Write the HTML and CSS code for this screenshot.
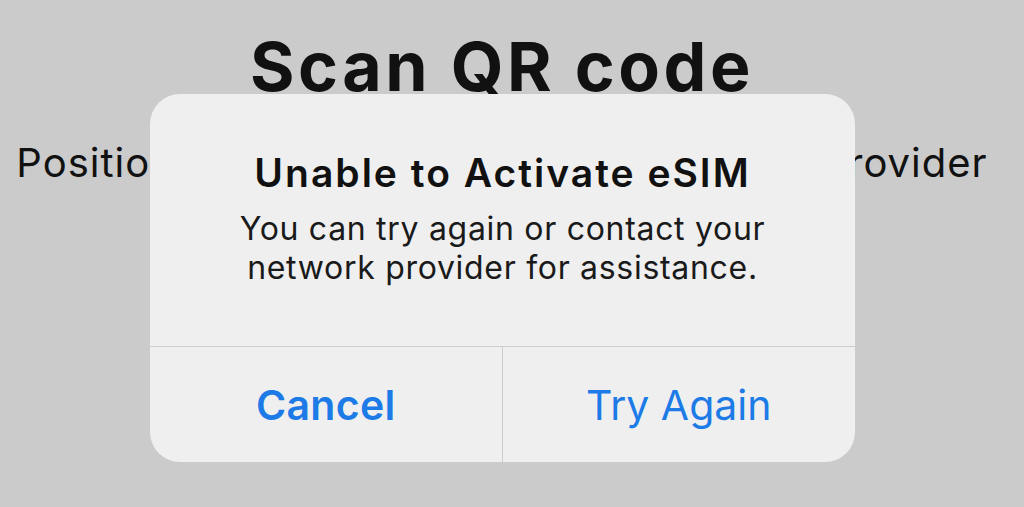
FILE: index.html
```html
<!DOCTYPE html>
<html lang="en">

<head>
  <meta charset="UTF-8" />
  <meta name="viewport" content="width=device-width, initial-scale=1" />
  <title>Scan QR code</title>
  <link rel="stylesheet" href="styles.css">
</head>

<body>

  <div class="screen">
    <h1 class="scan-title">Scan QR code</h1>
    <p class="scan-hint">Position the QR code from your network provider</p>
  </div>

  <div class="alert">
    <div class="alert-body">
      <h2 class="alert-title">Unable to Activate eSIM</h2>
      <p class="alert-text">You can try again or contact your<br>network provider for assistance.</p>
    </div>
    <div class="alert-actions">
      <button class="alert-btn cancel">Cancel</button>
      <button class="alert-btn">Try Again</button>
    </div>
  </div>

</body>

</html>
```

FILE: styles.css
```css
body {
  font-family: Inter, "Noto Sans", sans-serif;
  margin: 0;
  background-color: #cbcbcb;
  color: #111;
  height: 507px;
  overflow: hidden;
}

.screen {
  text-align: center;
  padding: 26px 20px 0 0;
}

.scan-title {
  margin: 0;
  font-size: 68px;
  font-weight: 700;
  line-height: 80px;
  letter-spacing: 3.5px;
}

.scan-hint {
  margin: 32px 0 0;
  font-size: 40px;
  font-weight: 400;
  line-height: 50px;
  letter-spacing: 1px;
  white-space: nowrap;
}

/* modal over the content */
.alert {
  position: absolute;
  left: 150px;
  top: 94px;
  width: 705px;
  height: 368px;
  background-color: #efefef;
  border-radius: 30px;
  display: flex;
  flex-direction: column;
  overflow: hidden;
}

.alert-body {
  height: 252px;
  box-sizing: border-box;
  padding-top: 54px;
  text-align: center;
}

.alert-title {
  margin: 0;
  font-size: 39px;
  font-weight: 600;
  line-height: 50px;
  letter-spacing: 2px;
}

.alert-text {
  margin: 11px 0 0;
  font-size: 32px;
  font-weight: 400;
  line-height: 39px;
  letter-spacing: 0.7px;
  color: #1a1a1a;
}

.alert-actions {
  flex: 1;
  display: grid;
  grid-template-columns: 1fr 1fr;
  border-top: 1px solid #cdcdcd;
}

.alert-btn {
  background: transparent;
  border: none;
  font-family: inherit;
  font-size: 41px;
  font-weight: 400;
  color: #1c7be6;
  cursor: pointer;
}

.alert-btn.cancel {
  font-weight: 600;
  letter-spacing: 0.3px;
  border-right: 1px solid #cdcdcd;
}
```
